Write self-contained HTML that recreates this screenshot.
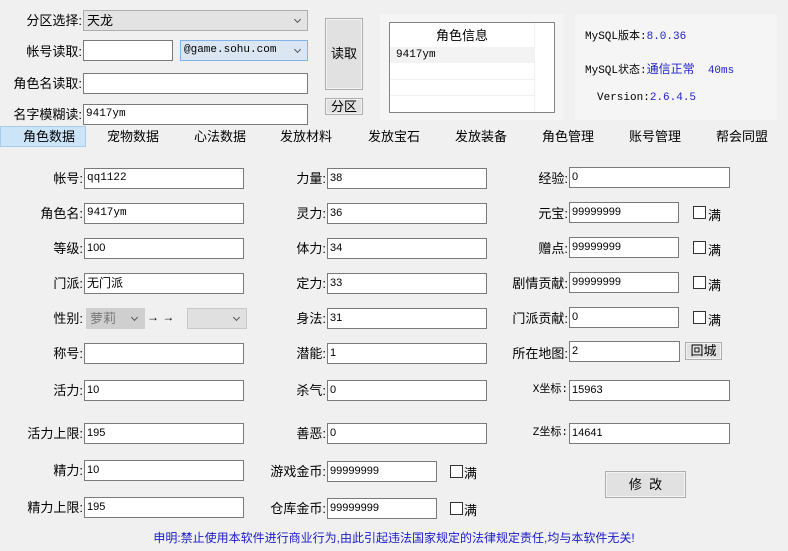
<!DOCTYPE html>
<html><head><meta charset="utf-8"><style>
body{margin:0;width:788px;height:551px;background:#f0f0f0;position:relative;overflow:hidden;font-family:"Liberation Sans","Noto Sans CJK SC",sans-serif;font-size:12px;color:#000}
div{position:absolute;box-sizing:border-box}
.l{text-align:right;line-height:21px;white-space:nowrap;font-size:13px}
.i{background:#fff;border:1px solid #7a7a7a;height:21px;line-height:19px;padding-left:2px;font-size:11px;font-family:"Liberation Sans",sans-serif}
.m{font-family:"Liberation Mono",monospace;font-size:11px}
.sel{border:1px solid #adadad;background:#e5e5e5;height:21px;line-height:19px;padding-left:3px;font-size:13px}
.sel:after{content:"";position:absolute;right:7px;top:6px;width:4px;height:4px;border-right:1px solid #555;border-bottom:1px solid #555;transform:rotate(45deg)}
.btn{border:1px solid #adadad;background:#e1e1e1;text-align:center;box-shadow:inset 0 0 0 1px #f4f4f4;font-size:13px}
.cb{width:13px;height:13px;border:1px solid #333;background:#fff}
.t{top:128px;line-height:18px;font-size:13px;text-align:center;width:80px}
.mz{font-size:13px}
</style></head><body>
<div class="l" style="left:0;width:82px;top:10px">分区选择:</div>
<div class="sel" style="left:83px;top:10px;width:225px;height:21px;background:#e3e3e3">天龙</div>
<div class="l" style="left:0;width:82px;top:41px">帐号读取:</div>
<div class="i" style="left:83px;top:40px;width:90px"></div>
<div class="sel m" style="left:180px;top:40px;width:128px;background:#dbe6f3;border-color:#7eb4ea;font-size:11px">@game.sohu.com</div>
<div class="l" style="left:0;width:82px;top:73px">角色名读取:</div>
<div class="i" style="left:83px;top:73px;width:225px"></div>
<div class="l" style="left:0;width:82px;top:104px">名字模糊读:</div>
<div class="i m" style="left:83px;top:104px;width:225px">9417ym</div>
<div class="btn" style="left:325px;top:18px;width:38px;height:72px;line-height:70px">读取</div>
<div class="btn" style="left:325px;top:98px;width:38px;height:17px;line-height:15px">分区</div>

<div style="left:380px;top:14px;width:183px;height:106px;background:#f5f5f5"></div>
<div style="left:389px;top:22px;width:166px;height:91px;background:#fff;border:1px solid #828282">
 <div style="left:0;top:0;width:144px;height:24px;line-height:26px;text-align:center;font-size:13px">角色信息</div>
 <div class="m" style="left:0;top:24px;width:144px;height:16px;background:#f3f3f3;padding-left:6px;line-height:16px">9417ym</div>
 <div style="left:0;top:56px;width:144px;border-top:1px solid #f0f0f0"></div>
 <div style="left:0;top:72px;width:144px;border-top:1px solid #f0f0f0"></div>
 <div style="left:144px;top:0;height:89px;border-left:1px solid #f0f0f0"></div>
</div>
<div style="left:575px;top:14px;width:202px;height:106px;background:#f5f5f5"></div>
<div class="m" style="left:585px;top:27px">MySQL版本:<span style="color:#2222cc">8.0.36</span></div>
<div class="m" style="left:585px;top:60px">MySQL状态:<span style="color:#2222cc;font-family:'Noto Sans CJK SC';font-size:12px">通信正常</span>&nbsp;&nbsp;<span style="color:#2222cc">40ms</span></div>
<div class="m" style="left:597px;top:92px">Version:<span style="color:#2222cc">2.6.4.5</span></div>

<div style="left:0;top:126px;width:86px;height:21px;background:#cce4f7;border:1px solid #a8cbe8"></div>
<div class="t" style="left:9px">角色数据</div>
<div class="t" style="left:93px">宠物数据</div>
<div class="t" style="left:180px">心法数据</div>
<div class="t" style="left:266px">发放材料</div>
<div class="t" style="left:354px">发放宝石</div>
<div class="t" style="left:441px">发放装备</div>
<div class="t" style="left:528px">角色管理</div>
<div class="t" style="left:615px">账号管理</div>
<div class="t" style="left:702px">帮会同盟</div>

<!-- col1 -->
<div class="l" style="left:0;width:83px;top:168px">帐号:</div><div class="i m" style="left:84px;top:168px;width:160px">qq1122</div>
<div class="l" style="left:0;width:83px;top:203px">角色名:</div><div class="i m" style="left:84px;top:203px;width:160px">9417ym</div>
<div class="l" style="left:0;width:83px;top:238px">等级:</div><div class="i" style="left:84px;top:238px;width:160px">100</div>
<div class="l" style="left:0;width:83px;top:273px">门派:</div><div class="i" style="left:84px;top:273px;width:160px;font-size:12px">无门派</div>
<div class="l" style="left:0;width:83px;top:308px">性别:</div>
<div class="sel" style="left:86px;top:308px;width:59px;background:#cfcfcf;border-color:#cfcfcf;color:#777">萝莉</div>
<div style="left:147px;top:310px;font-size:12px">→ →</div>
<div class="sel" style="left:187px;top:308px;width:60px;background:#e0e0e0;border-color:#c8c8c8"></div>
<div class="l" style="left:0;width:83px;top:343px">称号:</div><div class="i" style="left:84px;top:343px;width:160px"></div>
<div class="l" style="left:0;width:83px;top:380px">活力:</div><div class="i" style="left:84px;top:380px;width:160px">10</div>
<div class="l" style="left:0;width:83px;top:423px">活力上限:</div><div class="i" style="left:84px;top:423px;width:160px">195</div>
<div class="l" style="left:0;width:83px;top:460px">精力:</div><div class="i" style="left:84px;top:460px;width:160px">10</div>
<div class="l" style="left:0;width:83px;top:497px">精力上限:</div><div class="i" style="left:84px;top:497px;width:160px">195</div>

<!-- col2 -->
<div class="l" style="left:250px;width:76px;top:168px">力量:</div><div class="i" style="left:327px;top:168px;width:160px">38</div>
<div class="l" style="left:250px;width:76px;top:203px">灵力:</div><div class="i" style="left:327px;top:203px;width:160px">36</div>
<div class="l" style="left:250px;width:76px;top:238px">体力:</div><div class="i" style="left:327px;top:238px;width:160px">34</div>
<div class="l" style="left:250px;width:76px;top:273px">定力:</div><div class="i" style="left:327px;top:273px;width:160px">33</div>
<div class="l" style="left:250px;width:76px;top:308px">身法:</div><div class="i" style="left:327px;top:308px;width:160px">31</div>
<div class="l" style="left:250px;width:76px;top:343px">潜能:</div><div class="i" style="left:327px;top:343px;width:160px">1</div>
<div class="l" style="left:250px;width:76px;top:380px">杀气:</div><div class="i" style="left:327px;top:380px;width:160px">0</div>
<div class="l" style="left:250px;width:76px;top:423px">善恶:</div><div class="i" style="left:327px;top:423px;width:160px">0</div>
<div class="l" style="left:250px;width:76px;top:461px">游戏金币:</div><div class="i" style="left:327px;top:461px;width:110px">99999999</div>
<div class="cb" style="left:450px;top:465px"></div><div class="mz" style="left:464px;top:463px">满</div>
<div class="l" style="left:250px;width:76px;top:498px">仓库金币:</div><div class="i" style="left:327px;top:498px;width:110px">99999999</div>
<div class="cb" style="left:450px;top:502px"></div><div class="mz" style="left:464px;top:500px">满</div>

<!-- col3 -->
<div class="l" style="left:490px;width:78px;top:168px">经验:</div><div class="i" style="left:569px;top:167px;width:161px">0</div>
<div class="l" style="left:490px;width:78px;top:203px">元宝:</div><div class="i" style="left:569px;top:202px;width:110px">99999999</div>
<div class="cb" style="left:693px;top:206px"></div><div class="mz" style="left:708px;top:205px">满</div>
<div class="l" style="left:490px;width:78px;top:238px">赠点:</div><div class="i" style="left:569px;top:237px;width:110px">99999999</div>
<div class="cb" style="left:693px;top:241px"></div><div class="mz" style="left:708px;top:240px">满</div>
<div class="l" style="left:490px;width:78px;top:273px">剧情贡献:</div><div class="i" style="left:569px;top:272px;width:110px">99999999</div>
<div class="cb" style="left:693px;top:276px"></div><div class="mz" style="left:708px;top:275px">满</div>
<div class="l" style="left:490px;width:78px;top:308px">门派贡献:</div><div class="i" style="left:569px;top:307px;width:110px">0</div>
<div class="cb" style="left:693px;top:311px"></div><div class="mz" style="left:708px;top:310px">满</div>
<div class="l" style="left:490px;width:78px;top:343px">所在地图:</div><div class="i" style="left:569px;top:341px;width:111px">2</div>
<div class="btn" style="left:685px;top:342px;width:37px;height:18px;line-height:16px">回城</div>
<div class="l m" style="left:490px;width:78px;top:380px;font-size:11px">X坐标:</div><div class="i" style="left:569px;top:380px;width:161px">15963</div>
<div class="l m" style="left:490px;width:78px;top:423px;font-size:11px">Z坐标:</div><div class="i" style="left:569px;top:423px;width:161px">14641</div>
<div class="btn" style="left:605px;top:471px;width:81px;height:27px;line-height:25px">修&nbsp;&nbsp;改</div>

<div style="left:0;top:530px;width:788px;text-align:center;color:#1a1acc;line-height:16px">申明:禁止使用本软件进行商业行为,由此引起违法国家规定的法律规定责任,均与本软件无关!</div>
</body></html>
